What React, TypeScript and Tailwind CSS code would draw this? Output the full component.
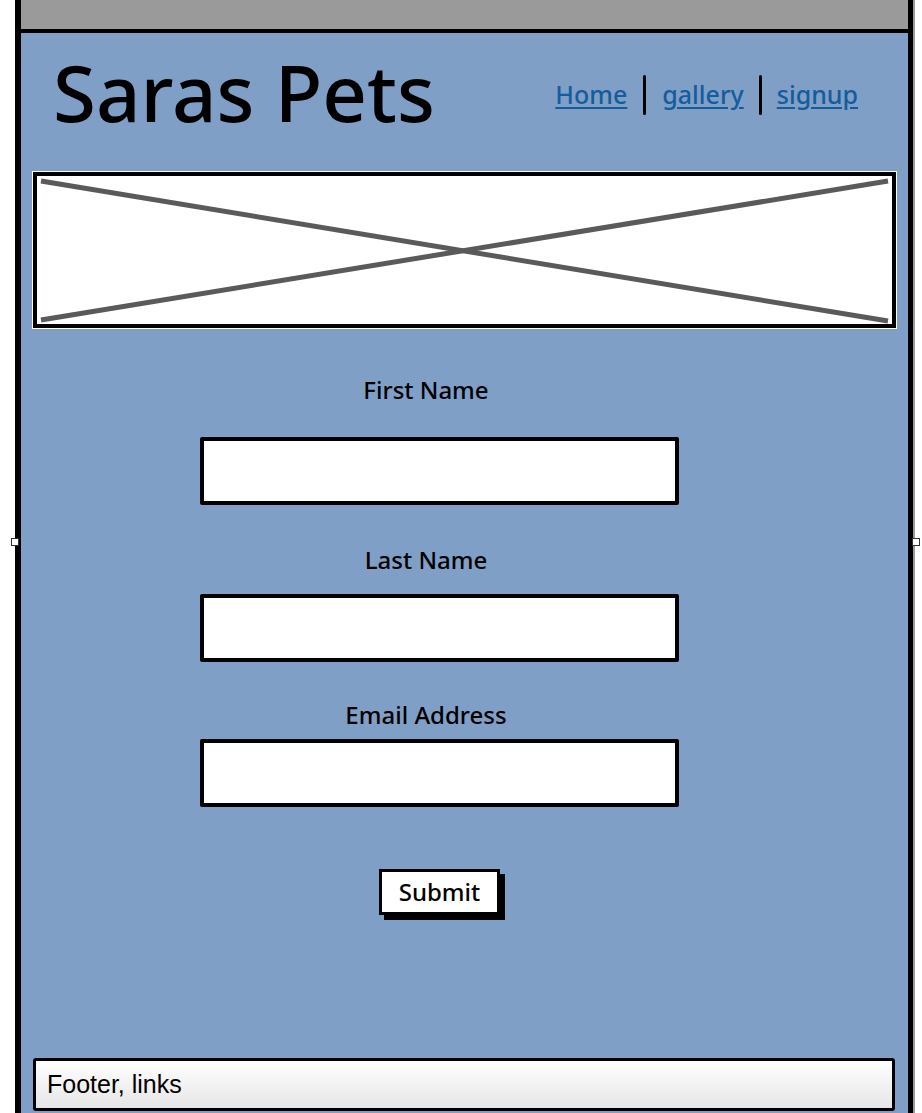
import React from "react";

const sketchFont = { fontFamily: "'Noto Sans', Lato, sans-serif" };

function ImagePlaceholder() {
  return (
    <div className="h-[156px] w-[863px] border-[4px] border-black bg-white outline outline-1 outline-white">
      <svg className="h-full w-full" viewBox="0 0 855 148" preserveAspectRatio="none" aria-hidden="true">
        <path d="M4 5 851 145" stroke="#5a5a5a" strokeWidth="5" />
        <path d="M4 144 851 5" stroke="#5a5a5a" strokeWidth="5" />
      </svg>
    </div>
  );
}

function Field({ label, labelClass }: { label: string; labelClass: string }) {
  return (
    <div className="flex flex-col">
      <div className={`pr-[27px] text-center text-[24px] font-medium leading-[30px] text-black ${labelClass}`}>{label}</div>
      <div className="h-[68px] w-[479px] rounded-[2px] border-[4px] border-black bg-white" />
    </div>
  );
}

export default function App() {
  return (
    <div className="relative h-[1113px] w-[922px] overflow-hidden bg-white" style={sketchFont}>
      <div className="ml-[15px] flex h-[1140px] w-[898px] flex-col border-l-[6px] border-r-[5px] border-black shadow-[2px_0_0_#9a9a9a]">
        <div className="h-[29px] bg-[#9a9a9a]" />
        <div className="h-[4px] bg-black" />
        <div className="flex flex-1 flex-col bg-[#7f9fc7] px-[12px]">
          <div className="flex h-[139px] items-start">
            <h1 className="ml-[20px] mt-[20px] text-[78px] font-medium leading-none text-black">Saras Pets</h1>
            <nav className="ml-auto mr-[38px] mt-[42px] flex items-center text-[25px] font-medium text-[#155c9c]">
              <a href="#" className="underline underline-offset-[3px]">Home</a>
              <span className="mx-[16px] h-[40px] w-[3px] rounded-full bg-black" />
              <a href="#" className="underline underline-offset-[3px]">gallery</a>
              <span className="mx-[15px] h-[40px] w-[3px] rounded-full bg-black" />
              <a href="#" className="underline underline-offset-[3px]">signup</a>
            </nav>
          </div>

          <ImagePlaceholder />

          <div className="ml-[167px] flex w-[479px] flex-col">
            <div className="mt-[47px]">
              <Field label="First Name" labelClass="mb-[32px]" />
            </div>
            <div className="mt-[40px]">
              <Field label="Last Name" labelClass="mb-[19px]" />
            </div>
            <div className="mt-[38px]">
              <Field label="Email Address" labelClass="mb-[9px]" />
            </div>
            <div className="mt-[62px] flex justify-center">
              <button
                type="button"
                className="h-[46px] w-[121px] border-[3px] border-black bg-white text-[24px] font-medium leading-none text-black shadow-[5px_5px_0_#000]"
              >
                Submit
              </button>
            </div>
          </div>

          <div
            className="mt-[143px] flex h-[53px] w-[862px] items-center rounded-[3px] border-[3px] border-black bg-gradient-to-b from-white to-[#e6e6e6] px-[11px] text-[25px] text-black"
            style={{ fontFamily: "'Liberation Sans', Arial, sans-serif" }}
          >
            Footer, links
          </div>
        </div>
      </div>

      <span className="absolute left-[11px] top-[538px] h-[8px] w-[8px] border border-[#333] bg-white" />
      <span className="absolute left-[912px] top-[538px] h-[8px] w-[8px] border border-[#333] bg-white" />
    </div>
  );
}
